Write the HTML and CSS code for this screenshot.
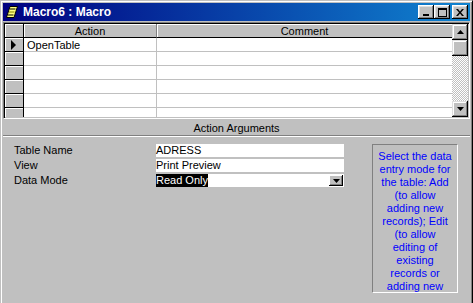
FILE: index.html
```html
<!DOCTYPE html>
<html>
<head>
<meta charset="utf-8">
<link rel="stylesheet" href="styles.css">
</head>
<body>
<div class="window">
  <div class="titlebar">
    <svg class="ticon" width="12" height="12" viewBox="0 0 12 12">
      <polygon points="4,0.5 11.5,0.5 8,11.5 0.5,11.5" fill="#ffff80" stroke="#000" stroke-width="1"/>
      <line x1="4" y1="3" x2="9.5" y2="3" stroke="#000" stroke-width="1"/>
      <line x1="3" y1="6" x2="8.5" y2="6" stroke="#808000" stroke-width="1"/>
      <line x1="2" y1="9" x2="7.5" y2="9" stroke="#000" stroke-width="1"/>
    </svg>
    <span class="title">Macro6 : Macro</span>
    <div class="tbtns">
      <div class="tbtn"><svg width="8" height="7" viewBox="0 0 8 7"><rect x="1" y="5" width="6" height="2" fill="#000"/></svg></div>
      <div class="tbtn"><svg width="9" height="9" viewBox="0 0 9 9"><rect x="0.5" y="0.5" width="8" height="8" fill="none" stroke="#000"/><rect x="0" y="0" width="9" height="2" fill="#000"/></svg></div>
      <div class="tbtn close"><svg width="8" height="7" viewBox="0 0 8 7"><path d="M0,0h2l2,2.5l2,-2.5h2l-3,3.5l3,3.5h-2l-2,-2.5l-2,2.5h-2l3,-3.5z" fill="#000"/></svg></div>
    </div>
  </div>
  <div class="grid">
    <div class="table">
      <div class="row head"><div class="sel"></div><div class="c1">Action</div><div class="c2">Comment</div></div>
      <div class="row"><div class="sel cur"><svg width="6" height="10" viewBox="0 0 6 10"><polygon points="0,0 5,5 0,10" fill="#000"/></svg></div><div class="c1">OpenTable</div><div class="c2"></div></div>
      <div class="row"><div class="sel"></div><div class="c1"></div><div class="c2"></div></div>
      <div class="row"><div class="sel"></div><div class="c1"></div><div class="c2"></div></div>
      <div class="row"><div class="sel"></div><div class="c1"></div><div class="c2"></div></div>
      <div class="row"><div class="sel"></div><div class="c1"></div><div class="c2"></div></div>
      <div class="row"><div class="sel"></div><div class="c1"></div><div class="c2"></div></div>
    </div>
    <div class="vscroll">
      <div class="sbtn"><svg width="7" height="4" viewBox="0 0 7 4"><polygon points="3.5,0 7,4 0,4" fill="#000"/></svg></div>
      <div class="sbtn"></div>
      <div class="track"></div>
      <div class="sbtn"><svg width="7" height="4" viewBox="0 0 7 4"><polygon points="0,0 7,0 3.5,4" fill="#000"/></svg></div>
    </div>
  </div>
  <div class="args">
    <div class="args-head">Action Arguments</div>
    <div class="args-body">
      <div class="fields">
        <div class="field"><span class="label">Table Name</span><span class="box">ADRESS</span></div>
        <div class="field"><span class="label">View</span><span class="box">Print Preview</span></div>
        <div class="field"><span class="label">Data Mode</span><span class="box"><span class="hl">Read Only</span><span class="dd"><svg width="7" height="4" viewBox="0 0 7 4"><polygon points="0,0 7,0 3.5,4" fill="#000"/></svg></span></span></div>
      </div>
      <div class="help">Select the data<br>entry mode for<br>the table: Add<br>(to allow<br>adding new<br>records); Edit<br>(to allow<br>editing of<br>existing<br>records or<br>adding new</div>
    </div>
  </div>
</div>
</body>
</html>
```
FILE: styles.css
```css
html, body {
  margin: 0;
  background: #c0c0c0;
  overflow: hidden;
}
body {
  font-family: "Liberation Sans", Arial, sans-serif;
  font-size: 11px;
  color: #000;
}
.window {
  width: 473px;
  height: 306px;
  box-sizing: border-box;
  border: 1px solid;
  border-color: #c0c0c0 #000 #000 #c0c0c0;
  box-shadow: inset 1px 1px #fff, inset -1px -1px #808080;
  padding: 2px;
  display: flex;
  flex-direction: column;
  background: #c0c0c0;
}
.titlebar {
  height: 18px;
  flex: none;
  display: flex;
  align-items: center;
  background: linear-gradient(to right, #000080, #1084d0);
  padding: 0 2px 0 3px;
}
.ticon { margin-right: 5px; flex: none; }
.title {
  color: #fff;
  font-weight: bold;
  font-size: 12px;
  flex: 1;
}
.tbtns { display: flex; }
.tbtn {
  width: 16px;
  height: 14px;
  box-sizing: border-box;
  background: #c0c0c0;
  box-shadow: inset -1px -1px #000, inset 1px 1px #fff, inset -2px -2px #808080, inset 2px 2px #dfdfdf;
  display: flex;
  align-items: center;
  justify-content: center;
}
.tbtn.close { margin-left: 2px; }
.grid {
  margin-top: 1px;
  height: 97px;
  flex: none;
  box-sizing: border-box;
  display: flex;
  border: 1px solid;
  border-color: #808080 #fff #fff #808080;
  box-shadow: inset 1px 1px #000, inset -1px -1px #c0c0c0;
  padding: 1px;
  background: #fff;
}
.table { flex: 1; overflow: hidden; }
.row { display: flex; height: 14px; }
.sel {
  width: 19px;
  flex: none;
  box-sizing: border-box;
  background: #c0c0c0;
  border-right: 1px solid #000;
  border-bottom: 1px solid #000;
  box-shadow: inset 1px 1px #fff;
  display: flex;
  align-items: center;
  justify-content: center;
}
.c1 {
  width: 133px;
  flex: none;
  box-sizing: border-box;
  border-right: 1px solid #c0c0c0;
  border-bottom: 1px solid #c0c0c0;
  padding-left: 3px;
  line-height: 14px;
  white-space: nowrap;
}
.c2 {
  flex: 1;
  border-bottom: 1px solid #c0c0c0;
  line-height: 14px;
}
.head .c1, .head .c2 {
  background: #c0c0c0;
  text-align: center;
  border-bottom-color: #000;
  padding-left: 0;
  box-shadow: inset 1px 1px #fff;
}
.head .c1 { border-right-color: #808080; }
.vscroll {
  width: 16px;
  flex: none;
  display: flex;
  flex-direction: column;
}
.sbtn {
  height: 16px;
  flex: none;
  box-sizing: border-box;
  background: #c0c0c0;
  box-shadow: inset -1px -1px #000, inset 1px 1px #dfdfdf, inset -2px -2px #808080, inset 2px 2px #fff;
  display: flex;
  align-items: center;
  justify-content: center;
}
.track {
  flex: 1;
  background: repeating-conic-gradient(#c0c0c0 0 25%, #fff 0 50%) 0 0 / 2px 2px;
}
.args {
  flex: 1;
  display: flex;
  flex-direction: column;
}
.args-head {
  height: 16px;
  line-height: 18px;
  text-align: center;
  border-bottom: 1px solid #808080;
}
.args-body {
  display: flex;
  border-top: 1px solid #fff;
  padding: 7px 0 0 11px;
}
.fields {
  width: 330px;
  display: flex;
  flex-direction: column;
  gap: 2px;
}
.field {
  display: flex;
  height: 13px;
  line-height: 13px;
}
.label { width: 142px; flex: none; }
.box {
  width: 188px;
  background: #fff;
  display: flex;
  white-space: nowrap;
}
.hl { background: #000; color: #fff; }
.dd {
  margin: 1px 1px 1px auto;
  width: 14px;
  height: 11px;
  box-sizing: border-box;
  background: #c0c0c0;
  box-shadow: inset -1px -1px #000, inset 1px 1px #fff, inset -2px -2px #808080;
  display: flex;
  align-items: center;
  justify-content: center;
}
.help {
  width: 86px;
  height: 149px;
  box-sizing: border-box;
  margin-left: 28px;
  border: 1px solid;
  border-color: #808080 #fff #fff #808080;
  color: #0000ff;
  text-align: center;
  line-height: 13px;
  padding: 5px 0 0;
  overflow: hidden;
  white-space: nowrap;
}
```
